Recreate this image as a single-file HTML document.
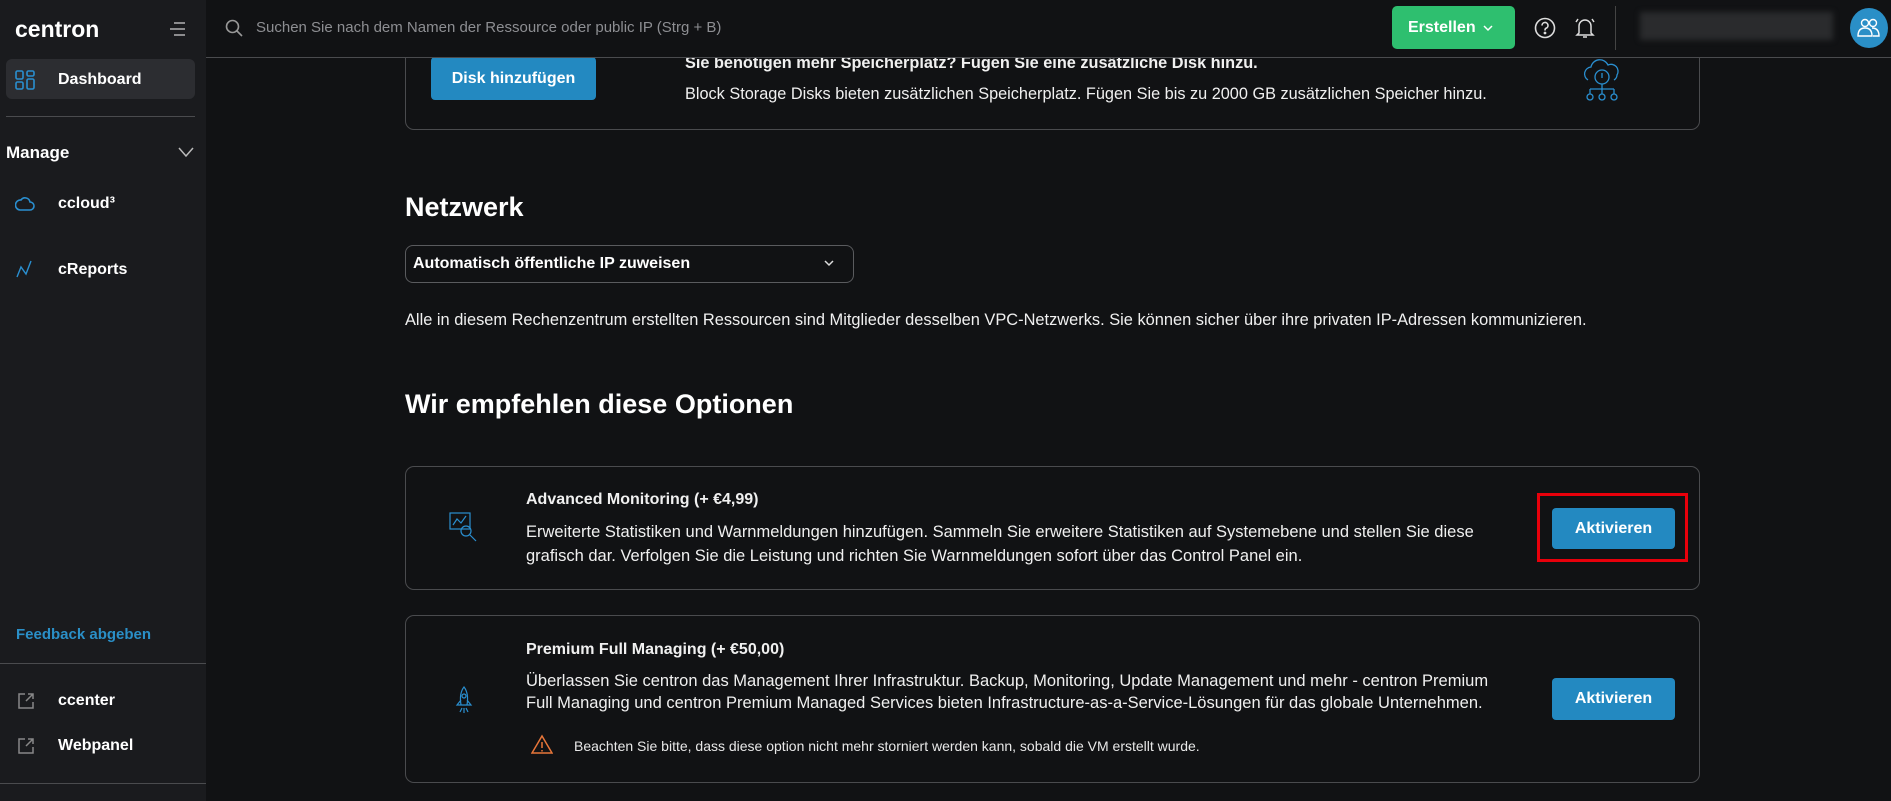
<!DOCTYPE html>
<html><head><meta charset="utf-8"><style>
*{margin:0;padding:0;box-sizing:border-box}
body{width:1891px;height:801px;background:#111214;font-family:"Liberation Sans",sans-serif;color:#fff;position:relative;overflow:hidden}
.a{position:absolute;white-space:nowrap}
.side{position:absolute;left:0;top:0;width:206px;height:801px;background:#1a1b1e}
.hl{position:absolute;height:1px;background:#4a4b4e}
.b{font-weight:bold}
.btn{position:absolute;background:#2389c1;border-radius:4px;color:#fff;font-weight:bold;font-size:16px;display:flex;align-items:center;justify-content:center}
.card{position:absolute;left:405px;width:1295px;border:1px solid #4a4b4e;border-radius:9px}
.t{font-size:16px;color:#f0f0f0}
</style></head><body>
<div class="side">
 <div class="a b" style="left:15px;top:16px;font-size:23px">centron</div>
 <svg class="a" style="left:168px;top:21px" width="18" height="16" stroke="#aaa" stroke-width="1.6"><line x1="6" y1="2" x2="17" y2="2"/><line x1="2" y1="8" x2="17" y2="8"/><line x1="6" y1="14" x2="17" y2="14"/></svg>
 <div class="a" style="left:6px;top:59px;width:189px;height:40px;background:#2c2d31;border-radius:6px"></div>
 <svg class="a" style="left:15px;top:70px" width="20" height="20" fill="none" stroke="#2a8fd0" stroke-width="1.6"><rect x="1" y="1" width="7" height="8" rx="1.5"/><rect x="12" y="1" width="7" height="5" rx="1.5"/><rect x="1" y="12" width="7" height="7" rx="1.5"/><rect x="12" y="9" width="7" height="10" rx="1.5"/></svg>
 <div class="a b" style="left:58px;top:71px;font-size:16px">Dashboard</div>
 <div class="hl" style="left:6px;top:116px;width:189px"></div>
 <div class="a b" style="left:6px;top:143px;font-size:17px">Manage</div>
 <svg class="a" style="left:177px;top:146px" width="18" height="12" fill="none" stroke="#bbb" stroke-width="1.5"><path d="M2 2l7 8 7-8"/></svg>
 <svg class="a" style="left:15px;top:196px" width="20" height="16" fill="none" stroke="#2a8fd0" stroke-width="1.6"><path d="M5 14h10a4 4 0 0 0 0-8 5 5 0 0 0-9-2 5 5 0 0 0-1 10z"/></svg>
 <div class="a b" style="left:58px;top:195px;font-size:16px">ccloud³</div>
 <svg class="a" style="left:16px;top:260px" width="16" height="18" fill="none" stroke="#2a8fd0" stroke-width="1.4"><path d="M1 17l4-10 5 7 5-13"/></svg>
 <div class="a b" style="left:58px;top:261px;font-size:16px">cReports</div>
 <div class="a b" style="left:16px;top:626px;font-size:15px;color:#2a8fc7">Feedback abgeben</div>
 <div class="hl" style="left:0;top:663px;width:206px"></div>
 <svg class="a" style="left:17px;top:692px" width="18" height="18" fill="none" stroke="#888" stroke-width="1.5"><path d="M8 2H2v14h14v-6M11 2h5v5M16 2l-7 7"/></svg>
 <div class="a b" style="left:58px;top:692px;font-size:16px">ccenter</div>
 <svg class="a" style="left:17px;top:737px" width="18" height="18" fill="none" stroke="#888" stroke-width="1.5"><path d="M8 2H2v14h14v-6M11 2h5v5M16 2l-7 7"/></svg>
 <div class="a b" style="left:58px;top:737px;font-size:16px">Webpanel</div>
 <div class="hl" style="left:0;top:783px;width:206px"></div>
</div>
<!-- content -->
<div class="card" style="top:-40px;height:170px"></div>
<div class="btn" style="left:431px;top:57px;width:165px;height:43px">Disk hinzufügen</div>
<div class="a b t" style="left:685px;top:54px;font-size:16.3px">Sie benötigen mehr Speicherplatz? Fügen Sie eine zusätzliche Disk hinzu.</div>
<div class="a t" style="left:685px;top:85px;font-size:16.3px">Block Storage Disks bieten zusätzlichen Speicherplatz. Fügen Sie bis zu 2000 GB zusätzlichen Speicher hinzu.</div>
<svg class="a" style="left:1580px;top:58px" width="46" height="46" fill="none" stroke="#2a8fd0" stroke-width="1.3"><path d="M8 22a7 7 0 0 1 3-13 9 9 0 0 1 17-2 7 7 0 0 1 9 10 6 6 0 0 1-3 5"/><circle cx="22" cy="19" r="7"/><path d="M22 15v5M22 26v5M10 31h24M10 31v5M22 31v5M34 31v5"/><circle cx="10" cy="39" r="3"/><circle cx="22" cy="39" r="3"/><circle cx="34" cy="39" r="3"/></svg>
<div class="a b" style="left:405px;top:192px;font-size:27px">Netzwerk</div>
<div class="a" style="left:405px;top:245px;width:449px;height:38px;border:1px solid #5a5b5e;border-radius:8px"></div>
<div class="a b" style="left:413px;top:255px;font-size:16px">Automatisch öffentliche IP zuweisen</div>
<svg class="a" style="left:823px;top:259px" width="12" height="8" fill="none" stroke="#ddd" stroke-width="1.5"><path d="M2 2l4 4 4-4"/></svg>
<div class="a t" style="left:405px;top:311px;font-size:16.4px">Alle in diesem Rechenzentrum erstellten Ressourcen sind Mitglieder desselben VPC-Netzwerks. Sie können sicher über ihre privaten IP-Adressen kommunizieren.</div>
<div class="a b" style="left:405px;top:389px;font-size:27px">Wir empfehlen diese Optionen</div>

<div class="card" style="top:466px;height:124px"></div>
<svg class="a" style="left:449px;top:511px" width="32" height="32" fill="none" stroke="#2a8fd0" stroke-width="1.2"><rect x="1" y="2" width="20" height="16"/><path d="M4 14l4-6 4 4 5-7"/><circle cx="17" cy="20" r="5"/><path d="M21 24l6 6"/></svg>
<div class="a b t" style="left:526px;top:491px">Advanced Monitoring (+ €4,99)</div>
<div class="a t" style="left:526px;top:523px;font-size:16.5px">Erweiterte Statistiken und Warnmeldungen hinzufügen. Sammeln Sie erweitere Statistiken auf Systemebene und stellen Sie diese</div>
<div class="a t" style="left:526px;top:547px;font-size:16.5px">grafisch dar. Verfolgen Sie die Leistung und richten Sie Warnmeldungen sofort über das Control Panel ein.</div>
<div class="a" style="left:1537px;top:493px;width:151px;height:69px;border:3px solid #e8000b"></div>
<div class="btn" style="left:1552px;top:508px;width:123px;height:41px">Aktivieren</div>

<div class="card" style="top:615px;height:168px"></div>
<svg class="a" style="left:452px;top:686px" width="24" height="28" fill="none" stroke="#2a8fd0" stroke-width="1.2"><path d="M12 1c-4 5-4 12-3 18h6c1-6 1-13-3-18zM9 14l-4 5h4M15 14l4 5h-4M10 22l-2 4M14 22l2 4M12 22v5"/><circle cx="12" cy="10" r="2"/></svg>
<div class="a b t" style="left:526px;top:641px">Premium Full Managing (+ €50,00)</div>
<div class="a t" style="left:526px;top:672px;font-size:16.5px">Überlassen Sie centron das Management Ihrer Infrastruktur. Backup, Monitoring, Update Management und mehr - centron Premium</div>
<div class="a t" style="left:526px;top:694px;font-size:16.5px">Full Managing und centron Premium Managed Services bieten Infrastructure-as-a-Service-Lösungen für das globale Unternehmen.</div>
<svg class="a" style="left:531px;top:734px" width="22" height="20" fill="none" stroke="#e8763a" stroke-width="1.5"><path d="M11 2L1 19h20z"/><path d="M11 8v6M11 16v1.5"/></svg>
<div class="a" style="left:574px;top:738px;font-size:14px;color:#e8e8e8">Beachten Sie bitte, dass diese option nicht mehr storniert werden kann, sobald die VM erstellt wurde.</div>
<div class="btn" style="left:1552px;top:678px;width:123px;height:42px">Aktivieren</div>

<!-- topbar -->
<div class="a" style="left:206px;top:0;width:1685px;height:58px;background:#111214;border-bottom:1px solid #4a4b4e"></div>
<svg class="a" style="left:225px;top:19px" width="18" height="18" fill="none" stroke="#999" stroke-width="1.6"><circle cx="7.5" cy="7.5" r="6"/><path d="M12 12l5 5"/></svg>
<div class="a" style="left:256px;top:19px;font-size:15px;color:#8d8e92">Suchen Sie nach dem Namen der Ressource oder public IP (Strg + B)</div>
<div class="a b" style="left:1392px;top:6px;width:123px;height:43px;background:#2ebf6f;border-radius:5px;font-size:16px;display:flex;align-items:center;padding-left:16px">Erstellen</div>
<svg class="a" style="left:1482px;top:24px" width="12" height="8" fill="none" stroke="#fff" stroke-width="1.5"><path d="M2 2l4 4 4-4"/></svg>
<svg class="a" style="left:1534px;top:17px" width="22" height="22" fill="none" stroke="#ddd" stroke-width="1.6"><circle cx="11" cy="11" r="9.5"/><path d="M8 8.5a3 3 0 1 1 4 2.8c-1 .4-1 1-1 2.2"/><circle cx="11" cy="16" r=".6" fill="#ddd"/></svg>
<svg class="a" style="left:1574px;top:16px" width="22" height="24" fill="none" stroke="#ddd" stroke-width="1.5"><path d="M5 17V10a6 6 0 0 1 12 0v7l2 2H3zM9 21h4M2 6l2-3M20 6l-2-3"/></svg>
<div class="a" style="left:1615px;top:6px;width:1px;height:44px;background:#444"></div>
<div class="a" style="left:1640px;top:12px;width:193px;height:28px;background:#2a2b2d;filter:blur(3px)"></div>
<div class="a" style="left:1850px;top:8px;width:38px;height:40px;border-radius:50%;background:#2a8fc7"></div>
<svg class="a" style="left:1857px;top:18px" width="24" height="20" fill="none" stroke="#fff" stroke-width="1.4"><circle cx="8" cy="5" r="3.5"/><circle cx="16" cy="5" r="3.5"/><path d="M1 18c0-6 3-8 7-8s7 2 7 8zM15 10c4 0 7 2 7 8h-6"/></svg>
</body></html>
